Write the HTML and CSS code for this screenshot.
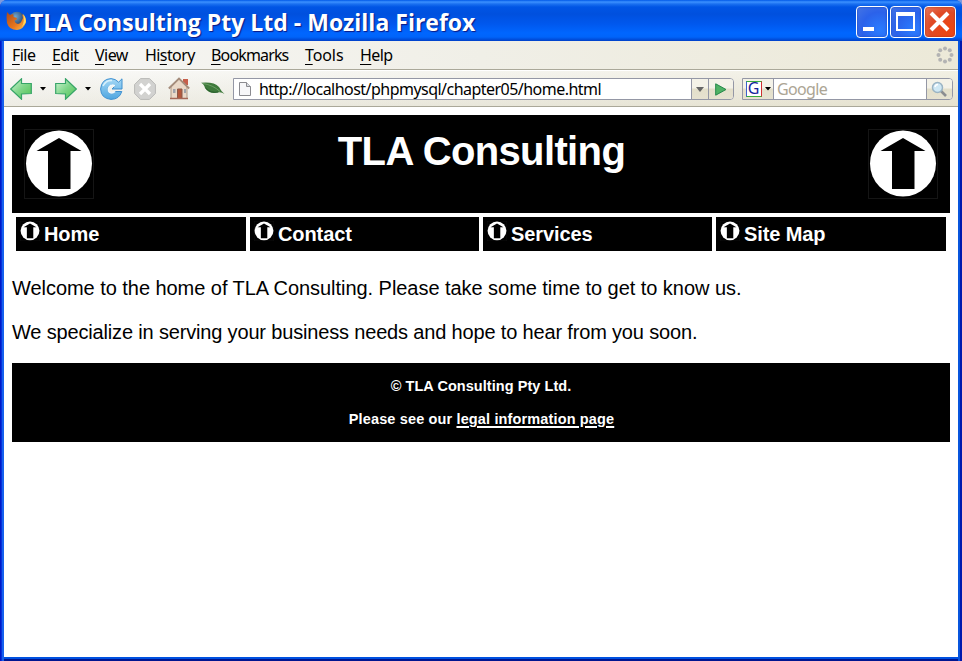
FILE: index.html
```html
<!DOCTYPE html>
<html lang="en">
<head>
<meta charset="utf-8">
<title>TLA Consulting Pty Ltd</title>
<link rel="stylesheet" href="styles.css">
</head>
<body>
<svg width="0" height="0" class="defs">
  <defs>
    <linearGradient id="green" x1="0" y1="0" x2="1" y2="1"><stop offset="0" stop-color="#d2f5d6"/><stop offset=".5" stop-color="#7fd68a"/><stop offset="1" stop-color="#4fc24f"/></linearGradient>
    <linearGradient id="blue" x1="0" y1="0" x2="0" y2="1"><stop offset="0" stop-color="#a5d8f5"/><stop offset="1" stop-color="#4fa6e0"/></linearGradient>
    <radialGradient id="globe" cx=".4" cy=".3" r=".7"><stop offset="0" stop-color="#6fa8d0"/><stop offset="1" stop-color="#142a56"/></radialGradient>
    <linearGradient id="fox" x1="0" y1="0" x2="1" y2="1"><stop offset="0" stop-color="#a8481a"/><stop offset=".6" stop-color="#e87820"/><stop offset="1" stop-color="#ffc850"/></linearGradient>
    <symbol id="logo" viewBox="0 0 70 70">
      <rect x=".5" y=".5" width="69" height="69" fill="#000" stroke="#151515"/>
      <circle cx="35" cy="34.5" r="33" fill="#fff"/>
      <path d="M35 9 57.500 22H46.500V60H24V22H12.500Z" fill="#000"/>
    </symbol>
  </defs>
</svg>
<div class="window">
  <header class="titlebar">
    <svg class="fox" width="21" height="20" viewBox="0 0 21 20">
      <circle cx="11" cy="9" r="8.300" fill="url(#globe)"/>
      <path d="M1 1 4 4Q5.500 3 7.500 3.500L7.500 6 11 7Q11 9 8.500 9.500 9 12.500 12 13 15 12.500 16 9L17 7 16 3Q20 6 20 11 18 18 11 19 3 19 1 12 0 6 1 1Z" fill="url(#fox)"/>
      <path d="M17 3Q21 7 19.500 12L16 16Q19 10 17 3Z" fill="#ffd860"/>
    </svg>
    <h1 class="caption">TLA Consulting Pty Ltd - Mozilla Firefox</h1>
    <div class="controls">
      <span class="ctl"><svg width="28" height="28"><path d="M5 19H16V23H5Z" fill="#fff"/></svg></span>
      <span class="ctl"><svg width="28" height="28"><path d="M4 4H23V23H4ZM6 8V21H21V8Z" fill="#fff" fill-rule="evenodd"/></svg></span>
      <span class="ctl close"><svg width="28" height="28"><path d="M5 5 22 22M22 5 5 22" stroke="#fff" stroke-width="4"/></svg></span>
    </div>
  </header>
  <nav class="menubar">
    <span class="m-file"><u>F</u>ile</span>
    <span class="m-edit"><u>E</u>dit</span>
    <span class="m-view"><u>V</u>iew</span>
    <span class="m-history">Hi<u>s</u>tory</span>
    <span class="m-bookmarks"><u>B</u>ookmarks</span>
    <span class="m-tools"><u>T</u>ools</span>
    <span class="m-help"><u>H</u>elp</span>
    <svg class="throbber" width="18" height="18" viewBox="0 0 18 18"><g fill="#b3b3b3"><circle cx="9" cy="2.500" r="2"/><circle cx="13.800" cy="4.200" r="2"/><circle cx="15.500" cy="9" r="2"/><circle cx="13.800" cy="13.800" r="2"/><circle cx="9" cy="15.500" r="2"/><circle cx="4.200" cy="13.800" r="2"/><circle cx="2.500" cy="9" r="2"/><circle cx="4.200" cy="4.200" r="2"/></g></svg>
  </nav>
  <div class="toolbar">
    <svg class="back" width="22" height="22" viewBox="0 0 22 22"><path d="M.7 11 11.500.8V5.500H21.300V15.500L11.500 16V21.200Z" fill="url(#green)" stroke="#37a568" stroke-width="1.200"/></svg>
    <svg class="drop" width="6" height="4"><path d="M0 0H6L3 3.500Z"/></svg>
    <svg class="forward" width="22" height="22" viewBox="0 0 22 22"><path d="M21.300 11 10.500.8V5.500H.7V15.500L10.500 16V21.200Z" fill="url(#green)" stroke="#37a568" stroke-width="1.200"/></svg>
    <svg class="drop" width="6" height="4"><path d="M0 0H6L3 3.500Z"/></svg>
    <svg class="reload" width="23" height="22" viewBox="0 0 23 22"><path d="M22 .8V11H12L15.200 7.800Q11.500 5.500 8.500 8.500 6.500 12 9 14.800 13 17 15.500 13.500H21.800Q19.500 21.300 11 21.400 1 20.500.6 11 1.500 1 11 .6 15.500.8 18.600 4.200Z" fill="url(#blue)" stroke="#3f90d0"/><path d="M15 8Q11.500 6 9 9 7.500 12 9.500 14.300 12.500 16 15 13.500" fill="none" stroke="#eef8fd" stroke-width="1.600"/><path d="M3 8Q6 2 12 2.500" fill="none" stroke="#d8f0fb" stroke-width="1.500"/></svg>
    <svg class="stop" width="22" height="22" viewBox="0 0 22 22"><path d="M6.500.6H15.500L21.400 6.500V15.500L15.500 21.400H6.500L.6 15.500V6.500Z" fill="#d2d2d0" stroke="#b9b9b7"/><path d="M6 6 16 16M16 6 6 16" stroke="#fff" stroke-width="3.200"/></svg>
    <svg class="home" width="22" height="23" viewBox="0 0 22 23"><path d="M15 2H20V8H15Z" fill="#c65f4b"/><path d="M3 10 11 2 19 10V21.500H3Z" fill="#ead9c8" stroke="#b09a85"/><path d="M.8 11.500 11 1.500 21.200 11.500" fill="none" stroke="#a58d7c" stroke-width="1.800"/><path d="M9.500 12H14V21.500H9.500Z" fill="#b4583c" stroke="#8b5b4b"/><path d="M5 12H7.500V16H5ZM16 12H18V16H16Z" fill="#a0a3aa"/><path d="M2 21.500H20" stroke="#a56857" stroke-width="1.500"/></svg>
    <svg class="leaf" width="24" height="13" viewBox="0 0 24 13"><path d="M0 .8Q13-.5 18 5 20 9 23.500 12 20 9.500 17 10.500 8 12.500 4 6 3 2 0 .8Z" fill="#3f7a3c"/><path d="M2 1.500Q12 3 19 9.500" fill="none" stroke="#79a870" stroke-width=".8"/><path d="M4.500 6Q10 11.500 17 10" fill="none" stroke="#265c2c"/></svg>
    <div class="urlbar">
      <svg class="page" width="12" height="14" viewBox="0 0 12 14"><path d="M.5.5H7.500L11.500 4.500V13.500H.5Z" fill="#f7f7f9" stroke="#8b8b90"/><path d="M7.500.5V4.500H11.500" fill="#d9dce2" stroke="#8b8b90"/></svg>
      <span class="url">http://localhost/phpmysql/chapter05/home.html</span>
      <span class="btn urldrop"><svg width="8" height="5"><path d="M0 0H8L4 5Z" fill="#666"/></svg></span>
      <span class="btn go"><svg width="12" height="13" viewBox="0 0 12 13"><path d="M.7.8 11 6.500.7 12.200Z" fill="#4fb265" stroke="#25884a"/></svg></span>
    </div>
    <div class="search">
      <span class="btn engine"><span class="g">G</span><svg width="6" height="4"><path d="M0 0H6L3 3.500Z"/></svg></span>
      <span class="hint">Google</span>
      <span class="btn glass"><svg width="17" height="17" viewBox="0 0 17 17"><path d="M10 10 15 15" stroke="#8b8d90" stroke-width="2.600"/><circle cx="6.500" cy="6.500" r="5" fill="#cfe8f4" stroke="#9bb4c4" stroke-width="1.500"/><path d="M4 6Q4.500 3.500 7 3.500" fill="none" stroke="#fff" stroke-width="1.500"/></svg></span>
    </div>
  </div>
  <main class="document">
    <div class="banner">
      <svg class="big"><use href="#logo"/></svg>
      <h2>TLA Consulting</h2>
      <svg class="big"><use href="#logo"/></svg>
    </div>
    <div class="links">
      <a><svg class="small"><use href="#logo"/></svg>Home</a>
      <a><svg class="small"><use href="#logo"/></svg>Contact</a>
      <a><svg class="small"><use href="#logo"/></svg>Services</a>
      <a><svg class="small"><use href="#logo"/></svg>Site Map</a>
    </div>
    <p class="welcome">Welcome to the home of TLA Consulting. Please take some time to get to know us.</p>
    <p class="special">We specialize in serving your business needs and hope to hear from you soon.</p>
    <footer>
      <p>© TLA Consulting Pty Ltd.</p>
      <p class="see">Please see our <span class="legal">legal information page</span></p>
    </footer>
  </main>
</div>
</body>
</html>
```
FILE: styles.css
```css
* { box-sizing: border-box; }
body { margin: 0; background: #7d9ade; overflow: hidden; }
.defs { position: absolute; }
svg { display: block; flex: none; }
.window {
  width: 962px; height: 661px; display: flex; flex-direction: column;
  border-radius: 7px 7px 0 0; overflow: hidden;
  padding: 0 4px 4px;
  background: linear-gradient(90deg, #0019c8 0 1px, #0831d9 1px 2px, #1660ee 2px 4px, transparent 4px calc(100% - 4px), #0855dd calc(100% - 4px) calc(100% - 2px), #0019ad calc(100% - 2px)),
    linear-gradient(#0050e0 0 659px, #001590 659px);
}
.titlebar {
  height: 41px; flex: none; margin: 0 -4px; padding: 2px 6px 0; display: flex; align-items: center;
  background: linear-gradient(#0058e8 0, #3c91ff 2px, #1a70f0 4px, #0055e5 7px, #0050de 14px, #0058ee 24px, #0066ff 33px, #0064fa 37px, #0040c8 41px);
}
.fox { margin-top: -1px; }
.caption {
  margin: 1px 0 0 3px; font: 700 23px/32px "Open Sans", sans-serif; color: #fff;
  white-space: nowrap; width: 520px; letter-spacing: 0; text-shadow: 1px 1px 1px #0a1883;
}
.controls { display: flex; gap: 2px; margin-left: auto; }
.ctl {
  width: 32px; height: 32px; border: 1px solid #fff; border-radius: 4px; padding: 1px;
  background: radial-gradient(circle at 75% 75%, #2a7cff, #2b62ea 55%, #4675e4);
  box-shadow: inset 0 0 2px #1641b4;
}
.ctl.close { background: radial-gradient(circle at 75% 75%, #ee4510, #df4a26 55%, #e67a60); box-shadow: inset 0 0 2px #a02808; }
.menubar {
  height: 29px; flex: none; padding: 0 4px 0 8px; display: flex; align-items: center;
  font: 16px/20px "Noto Sans", sans-serif; color: #000;
  background: linear-gradient(90deg, #f7f7f5, #f0efe7 50%, #ece9d8);
  border-bottom: 1px solid #aaa899;
}
.menubar span { white-space: nowrap; letter-spacing: -0.55px; }
.menubar u { text-underline-offset: 3px; text-decoration-thickness: 1px; }
.m-file { width: 40px; }
.m-edit { width: 43px; }
.m-view { width: 50px; }
.menubar .m-history { width: 66px; letter-spacing: -0.6px; }
.menubar .m-bookmarks { width: 94px; letter-spacing: -0.85px; }
.menubar .m-tools { width: 55px; letter-spacing: -0.1px; }
.throbber { margin-left: auto; }
.toolbar {
  height: 37px; flex: none; display: flex; align-items: center; padding: 0 5px 0 6px;
  background: linear-gradient(rgba(255,255,255,.3), rgba(210,205,180,.25)), linear-gradient(90deg, #f7f7f5, #f0efe7 50%, #ece9d8);
  border-top: 1px solid #fff; border-bottom: 1px solid #aaa899;
}
.drop { margin: 1px 9px 0 8px; }
.stop { margin-left: 11px; }
.home { margin-left: 12px; }
.leaf { margin: 0 8px 0 11px; }
.urlbar, .search { display: flex; align-items: stretch; height: 22px; border: 1px solid #9497a5; background: #fff; margin-top: 1px; }
.urlbar { width: 501px; border-radius: 0 4px 4px 0; }
.page { margin: 3px 8px 0 5px; }
.url, .hint { font: 16px/20px "Noto Sans", sans-serif; white-space: nowrap; }
.url { letter-spacing: -0.53px; flex: 1; }
.btn { display: flex; align-items: center; justify-content: center; background: linear-gradient(#f4f2e8 45%, #e3dfca 50%, #e6e2d0); border-left: 1px solid #9497a5; }
.urldrop { width: 17px; }
.go { width: 25px; border-radius: 0 3px 3px 0; }
.search { width: 211px; margin-left: 8px; border-radius: 0 4px 4px 0; }
.engine { width: 31px; border-left: 0; border-right: 1px solid #9497a5; gap: 3px; }
.g { width: 16px; height: 16px; border: 1px solid; border-color: #3aae3a #d03030 #3aae3a #3b62cc; background: #fff; color: #15239b; font: 16px/13px "Noto Sans", sans-serif; text-align: center; }
.hint { color: #aca594; flex: 1; padding-left: 3px; letter-spacing: -0.65px; }
.glass { width: 26px; border-radius: 0 3px 3px 0; }
.document { flex: 1; background: #fff; padding: 8px; font-family: "Liberation Sans", Arial, sans-serif; color: #000; }
.banner { height: 98px; background: #000; padding: 14px 12px; display: flex; justify-content: space-between; }
.big { width: 70px; height: 70px; }
.banner h2 { margin: -1px 0 0; font-size: 40px; line-height: 46px; color: #fff; white-space: nowrap; letter-spacing: -0.63px; padding-left: 1px; }
.links { display: grid; grid-template-columns: 230px 229px 229px 230px; gap: 4px; padding: 4px; }
.links a { height: 34px; background: #000; color: #fff; font-weight: bold; font-size: 20px; line-height: 34px; display: flex; padding-left: 4px; letter-spacing: -0.1px; }
.small { width: 20px; height: 20px; margin: 4px 4px 0 0; }
.document > p { margin: 0; font-size: 20px; line-height: 24px; white-space: nowrap; }
.document > .welcome { margin-top: 21px; letter-spacing: -0.045px; }
.document > .special { margin-top: 20px; letter-spacing: -0.165px; }
footer { margin-top: 19px; height: 79px; background: #000; color: #fff; font-weight: bold; text-align: center; padding-top: 14px; }
footer p { margin: 0 0 15px; font-size: 14.5px; line-height: 18px; letter-spacing: 0.05px; }
footer .see { letter-spacing: 0.14px; padding-left: 1px; }
.legal { text-decoration: underline; text-decoration-thickness: 2px; text-underline-offset: 2px; }
```
